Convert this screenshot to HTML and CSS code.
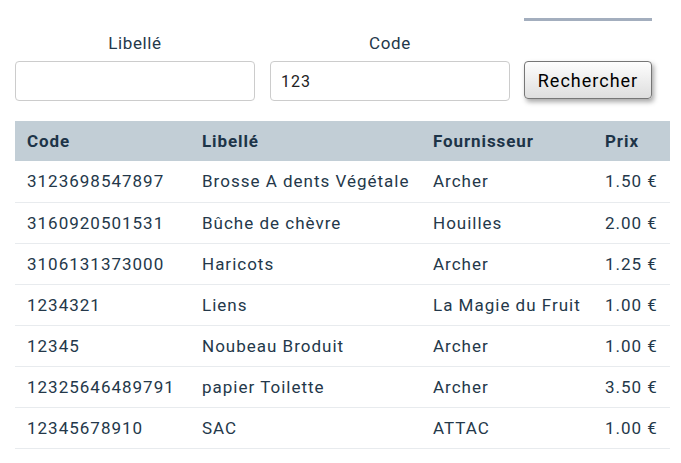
FILE: index.html
```html
<!DOCTYPE html>
<html lang="fr">
<head>
    <meta charset="UTF-8">
    <meta name="viewport" content="width=device-width, initial-scale=1.0">
    <title>Produits</title>
    <link rel="stylesheet" href="styles.css">
</head>
<body>
    <div class="app">
        <!-- Search form -->
        <div class="search">
            <div class="field">
                <label for="libelle">Libellé</label>
                <input type="text" id="libelle" value="">
            </div>
            <div class="field">
                <label for="code">Code</label>
                <input type="text" id="code" value="123">
            </div>
            <div class="action">
                <div class="progress"></div>
                <button class="search-button">Rechercher</button>
            </div>
        </div>

        <!-- Results -->
        <table class="products">
            <colgroup>
                <col class="col-code">
                <col class="col-libelle">
                <col class="col-fournisseur">
                <col class="col-prix">
            </colgroup>
            <thead>
                <tr>
                    <th>Code</th>
                    <th>Libellé</th>
                    <th>Fournisseur</th>
                    <th>Prix</th>
                </tr>
            </thead>
            <tbody>
                <tr><td>3123698547897</td><td>Brosse A dents Végétale</td><td>Archer</td><td>1.50 €</td></tr>
                <tr><td>3160920501531</td><td>Bûche de chèvre</td><td>Houilles</td><td>2.00 €</td></tr>
                <tr><td>3106131373000</td><td>Haricots</td><td>Archer</td><td>1.25 €</td></tr>
                <tr><td>1234321</td><td>Liens</td><td>La Magie du Fruit</td><td>1.00 €</td></tr>
                <tr><td>12345</td><td>Noubeau Broduit</td><td>Archer</td><td>1.00 €</td></tr>
                <tr><td>12325646489791</td><td>papier Toilette</td><td>Archer</td><td>3.50 €</td></tr>
                <tr><td>12345678910</td><td>SAC</td><td>ATTAC</td><td>1.00 €</td></tr>
            </tbody>
        </table>
    </div>
</body>
</html>
```

FILE: styles.css
```css
* {
    margin: 0;
    padding: 0;
    box-sizing: border-box;
}

body {
    font-family: Roboto, 'Liberation Sans', sans-serif;
    color: #24384a;
    background-color: #ffffff;
    letter-spacing: 1px;
}

.app {
    padding: 18px 11px 0 15px;
}

.search {
    display: flex;
    align-items: flex-end;
    gap: 15px;
}

.field {
    display: flex;
    flex-direction: column;
    width: 240px;
}

.field label {
    text-align: center;
    font-size: 17px;
    line-height: 24px;
    margin-bottom: 6px;
    letter-spacing: 0.6px;
}

.field input {
    height: 40px;
    border: 1px solid #cccccc;
    border-radius: 4px;
    padding: 0 10px;
    font-family: Roboto, 'Liberation Sans', sans-serif;
    font-size: 16px;
    letter-spacing: 1px;
    color: #222222;
    outline: none;
}

.action {
    display: flex;
    flex-direction: column;
    width: 128px;
    margin-left: -1px;
    margin-bottom: 2px;
}

.progress {
    height: 3px;
    background-color: #a3aebe;
    margin-bottom: 40px;
}

.search-button {
    height: 38px;
    border: 1px solid #767676;
    border-radius: 4px;
    background: linear-gradient(#fdfdfd, #dedede);
    box-shadow: 2px 3px 5px rgba(0, 0, 0, 0.35);
    font-family: Roboto, 'Liberation Sans', sans-serif;
    font-size: 18px;
    letter-spacing: 1px;
    color: #000000;
    cursor: pointer;
}

.products {
    margin-top: 20px;
    width: 655px;
    table-layout: fixed;
    border-collapse: collapse;
    font-size: 17px;
}

.col-code {
    width: 175px;
}

.col-libelle {
    width: 231px;
}

.col-fournisseur {
    width: 172px;
}

.col-prix {
    width: 77px;
}

.products th {
    background-color: #c2ced6;
    color: #1d3448;
    font-weight: bold;
    text-align: left;
    height: 40px;
    padding: 0 12px;
    letter-spacing: 0.9px;
}

.products td {
    height: 41px;
    padding: 0 12px;
    border-bottom: 1px solid #e8ebee;
    white-space: nowrap;
}
```
